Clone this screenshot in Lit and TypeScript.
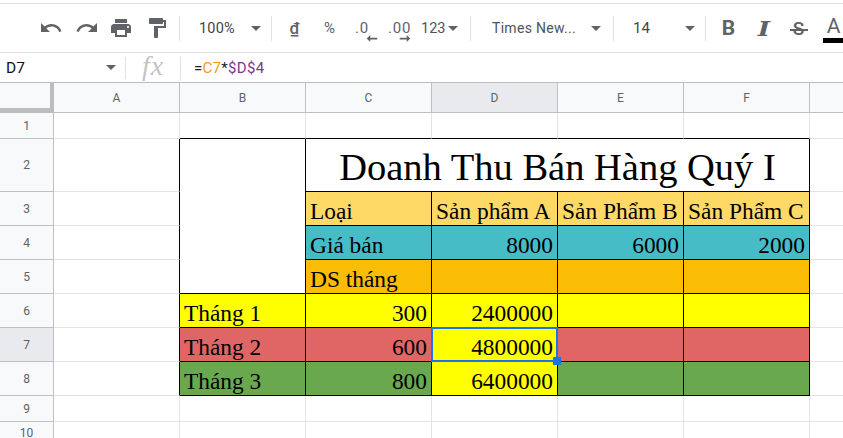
import { LitElement, html, css, nothing } from "lit";
import { customElement } from "lit/decorators.js";

const ICONS = {
  undo: "M12.5 8c-2.65 0-5.05.99-6.9 2.6L2 7v9h9l-3.62-3.62c1.39-1.16 3.16-1.88 5.12-1.88 3.54 0 6.55 2.31 7.6 5.5l2.37-.78C21.08 11.03 17.15 8 12.5 8z",
  redo: "M18.4 10.6C16.55 8.99 14.15 8 11.5 8c-4.65 0-8.58 3.03-9.96 7.22L3.9 16c1.05-3.19 4.05-5.5 7.6-5.5 1.95 0 3.73.72 5.12 1.88L13 16h9V7l-3.6 3.6z",
  print: "M19 8H5c-1.66 0-3 1.34-3 3v6h4v4h12v-4h4v-6c0-1.66-1.34-3-3-3zm-3 11H8v-5h8v5zm3-7c-.55 0-1-.45-1-1s.45-1 1-1 1 .45 1 1-.45 1-1 1zm-1-9H6v4h12V3z",
  paint: "M18 4V3c0-.55-.45-1-1-1H5c-.55 0-1 .45-1 1v4c0 .55.45 1 1 1h12c.55 0 1-.45 1-1V6h1v4H9v11c0 .55.45 1 1 1h2c.55 0 1-.45 1-1v-9h8V4h-3z",
};

type Cell = { t?: string; bg?: string; right?: boolean; big?: boolean; black?: boolean; sel?: boolean };

const COLS = ["A", "B", "C", "D", "E", "F", ""];
const ROWS = [1, 2, 3, 4, 5, 6, 7, 8, 9, 10];

const y = "yellow";
const r = "red";
const g = "green";

const TABLE: Record<string, Cell> = {
  C3: { t: "Loại", bg: "gold" }, D3: { t: "Sản phẩm A", bg: "gold" }, E3: { t: "Sản Phẩm B", bg: "gold" }, F3: { t: "Sản Phẩm C", bg: "gold" },
  C4: { t: "Giá bán", bg: "teal" }, D4: { t: "8000", bg: "teal", right: true }, E4: { t: "6000", bg: "teal", right: true }, F4: { t: "2000", bg: "teal", right: true },
  C5: { t: "DS tháng", bg: "amber" }, D5: { bg: "amber" }, E5: { bg: "amber" }, F5: { bg: "amber" },
  B6: { t: "Tháng 1", bg: y }, C6: { t: "300", bg: y, right: true }, D6: { t: "2400000", bg: y, right: true }, E6: { bg: y }, F6: { bg: y },
  B7: { t: "Tháng 2", bg: r }, C7: { t: "600", bg: r, right: true }, D7: { t: "4800000", bg: y, right: true, sel: true }, E7: { bg: r }, F7: { bg: r },
  B8: { t: "Tháng 3", bg: g }, C8: { t: "800", bg: g, right: true }, D8: { t: "6400000", bg: y, right: true }, E8: { bg: g }, F8: { bg: g },
};

@customElement("app-root")
export class AppRoot extends LitElement {
  static styles = css`
    :host { display: block; width: 843px; height: 438px; overflow: hidden; background: #fff; font-family: Roboto, sans-serif; }
    .toolbar { height: 48px; margin-top: 3px; border-top: 1px solid #e0e0e0; border-bottom: 1px solid #e0e0e0; display: flex; align-items: center; overflow: hidden; color: #444; font-size: 14px; }
    .sec { display: flex; align-items: center; flex: none; height: 100%; box-sizing: border-box; }
    .s1 { width: 179px; padding-left: 33px; }
    .s2 { width: 91px; padding: 0 10px 0 19px; justify-content: space-between; font-size: 14.5px; letter-spacing: .2px; }
    .s3 { width: 198px; padding-left: 5px; }
    .s4 { width: 142px; padding: 0 12px 0 21px; justify-content: space-between; color: #50535a; letter-spacing: .3px; }
    .s5 { width: 91px; padding: 0 10px 0 19px; justify-content: space-between; font-size: 15px; }
    .s6 { padding-left: 5px; }
    .div { width: 1px; height: 25px; background: #e0e0e0; flex: none; }
    .ib { width: 36px; height: 100%; display: flex; align-items: center; justify-content: center; flex: none; }
    .ib.tuck { margin-left: -2px; }
    .ib svg { width: 24px; height: 24px; fill: #5f6368; display: block; }
    .fb { width: 35px; height: 100%; flex: none; display: flex; align-items: center; justify-content: center; color: #5f6368; position: relative; }
    .pct { font-size: 15px; }
    .dong { font-size: 17px; color: #5f6368; text-decoration: underline; font-weight: 500; }
    .dec { display: flex; flex-direction: column; line-height: 14px; color: #5f6368; font-size: 15px; letter-spacing: .8px; padding-top: 6px; width: 23px; }
    .dec.one { margin-left: 4px; }
    .dec svg { width: 12px; height: 7px; fill: #5f6368; display: block; align-self: flex-end; margin-top: 0; }
    .num { display: flex; align-items: center; gap: 3px; padding-left: 4px; color: #50535a; font-size: 14.5px; }
    .tri { width: 0; height: 0; border-left: 5px solid transparent; border-right: 5px solid transparent; border-top: 5px solid #5f6368; flex: none; }
    .b { font: 700 21px Roboto, sans-serif; color: #5f6368; }
    .i { font: italic 700 21px "DejaVu Serif", serif; color: #5f6368; transform: scaleX(1.25); }
    .st { font: 500 19px Roboto, sans-serif; color: #5f6368; position: relative; width: 18px; text-align: center; }
    .st::after { content: ""; position: absolute; left: 0; right: 0; top: 12px; height: 2px; background: #5f6368; }
    .a { display: flex; flex-direction: column; align-items: center; font: 400 21px/21px Roboto, sans-serif; color: #5f6368; padding-top: 3px; }
    .a span { width: 21px; height: 5px; background: #000; margin-top: 1px; }

    .fbar { display: flex; align-items: center; border-bottom: 1px solid #bdbdbd; height: 30px; box-sizing: border-box; }
    .name { width: 125px; box-sizing: border-box; padding: 0 9px 0 6px; display: flex; justify-content: space-between; align-items: center; color: #111; font-size: 15.5px; flex: none; }
    .fdiv { width: 1px; height: 22px; background: #e0e0e0; flex: none; }
    .fx { width: 54px; height: 29px; flex: none; text-align: center; font: italic 28px/25px "Liberation Serif", serif; color: #c4c4c4; letter-spacing: 1px; }
    .formula { padding-left: 13px; font-size: 15px; letter-spacing: .3px; color: #222; }
    .c7 { color: #f7981d; }
    .abs { color: #7e3794; }

    .grid { display: grid; grid-template-columns: 54px repeat(6, 126px) 34px; grid-template-rows: 30px 26px 53px repeat(6, 34px) 26px 26px; }
    .corner { position: relative; background: #f8f9fa; border-right: 4px solid #bdbdbd; border-bottom: 5px solid #bdbdbd; box-sizing: border-box; }
    .ch, .rh { background: #f8f9fa; box-sizing: border-box; display: flex; align-items: center; justify-content: center; color: #5f6368; font-size: 12px; border-right: 1px solid #c0c0c0; border-bottom: 1px solid #c0c0c0; }
    .ch.on, .rh.on { background: #e8eaed; }
    .rh.last { align-items: flex-start; padding-top: 4px; }
    .cell { box-sizing: border-box; border-right: 1px solid #e2e3e3; border-bottom: 1px solid #e2e3e3; position: relative; font: 23.4px/24px "Liberation Serif", serif; color: #000; display: flex; align-items: flex-end; padding: 0 4px 2px 4px; white-space: nowrap; overflow: visible; min-width: 0; }
    .cell.br { border-right-color: #000; }
    .cell.bb { border-bottom-color: #000; }
    .cell.right { justify-content: flex-end; }
    .cell.gold { background: #ffd966; }
    .cell.teal { background: #46bdc6; }
    .cell.amber { background: #fbbc04; }
    .cell.yellow { background: #ffff00; }
    .cell.red { background: #e06666; }
    .cell.green { background: #6aa84f; }
    .cell.title { font-size: 38.5px; line-height: 44px; justify-content: center; padding: 0 0 2px; }
    .cell.active { z-index: 1; }
    .sel { position: absolute; left: -1px; top: -1px; right: -1px; bottom: -1px; border: 2px solid #1a73e8; pointer-events: none; }
    .handle { position: absolute; right: -5px; bottom: -5px; width: 8px; height: 8px; background: #1a73e8; }
  `;

  private icon(name: keyof typeof ICONS, cls = "") {
    return html`<div class="ib ${cls}"><svg viewBox="0 0 24 24"><path d=${ICONS[name]}></path></svg></div>`;
  }

  private cellClass(col: string, row: number, c?: Cell) {
    const inTable = row >= 2 && row <= 8;
    const cls = ["cell"];
    if (c?.bg) cls.push(c.bg);
    if (c?.right) cls.push("right");
    if (c?.sel) cls.push("active");
    if (inTable && col !== "") cls.push("br");
    if (col !== "A" && col !== "" && row >= 1 && row <= 8) cls.push("bb");
    return cls.join(" ");
  }

  private renderGrid() {
    const out: unknown[] = [html`<div class="corner"></div>`];
    COLS.forEach((c) => out.push(html`<div class="ch ${c === "D" ? "on" : ""}">${c}</div>`));
    ROWS.forEach((row) => {
      out.push(html`<div class="rh ${row === 7 ? "on" : ""} ${row === 10 ? "last" : ""}">${row}</div>`);
      COLS.forEach((col) => {
        const key = col + row;
        if (key === "B2") {
          out.push(html`<div class="cell br bb" style="grid-row: span 4"></div>`);
          return;
        }
        if (col === "B" && row >= 3 && row <= 5) return;
        if (key === "C2") {
          out.push(html`<div class="cell br bb title" style="grid-column: span 4">Doanh Thu Bán Hàng Quý I</div>`);
          return;
        }
        if (row === 2 && ["D", "E", "F"].includes(col)) return;
        const c = TABLE[key];
        out.push(html`<div class=${this.cellClass(col, row, c)}>${c?.t ?? nothing}${c?.sel ? html`<div class="sel"><div class="handle"></div></div>` : nothing}</div>`);
      });
    });
    return out;
  }

  render() {
    return html`
      <div class="toolbar">
        <div class="sec s1">${this.icon("undo")}${this.icon("redo")}${this.icon("print", "tuck")}${this.icon("paint")}</div>
        <div class="div"></div>
        <div class="sec s2"><span>100%</span><i class="tri"></i></div>
        <div class="div"></div>
        <div class="sec s3">
          <div class="fb"><span class="dong">₫</span></div>
          <div class="fb"><span class="pct">%</span></div>
          <div class="fb"><div class="dec one"><span>.0</span><svg viewBox="0 0 12 8"><path d="M12 3H4V0L0 4l4 4V5h8z"></path></svg></div></div>
          <div class="fb"><div class="dec"><span>.00</span><svg viewBox="0 0 12 8"><path d="M0 3h8V0l4 4-4 4V5H0z"></path></svg></div></div>
          <div class="num"><span>123</span><i class="tri"></i></div>
        </div>
        <div class="div"></div>
        <div class="sec s4"><span>Times New...</span><i class="tri"></i></div>
        <div class="div"></div>
        <div class="sec s5"><span>14</span><i class="tri"></i></div>
        <div class="div"></div>
        <div class="sec s6">
          <div class="fb"><span class="b">B</span></div>
          <div class="fb"><span class="i">I</span></div>
          <div class="fb"><span class="st">S</span></div>
          <div class="fb"><div class="a">A<span></span></div></div>
        </div>
      </div>
      <div class="fbar">
        <div class="name"><span>D7</span><i class="tri"></i></div>
        <div class="fdiv"></div>
        <div class="fx">fx</div>
        <div class="fdiv"></div>
        <div class="formula">=<span class="c7">C7</span>*<span class="abs">$D$4</span></div>
      </div>
      <div class="grid">${this.renderGrid()}</div>
    `;
  }
}
